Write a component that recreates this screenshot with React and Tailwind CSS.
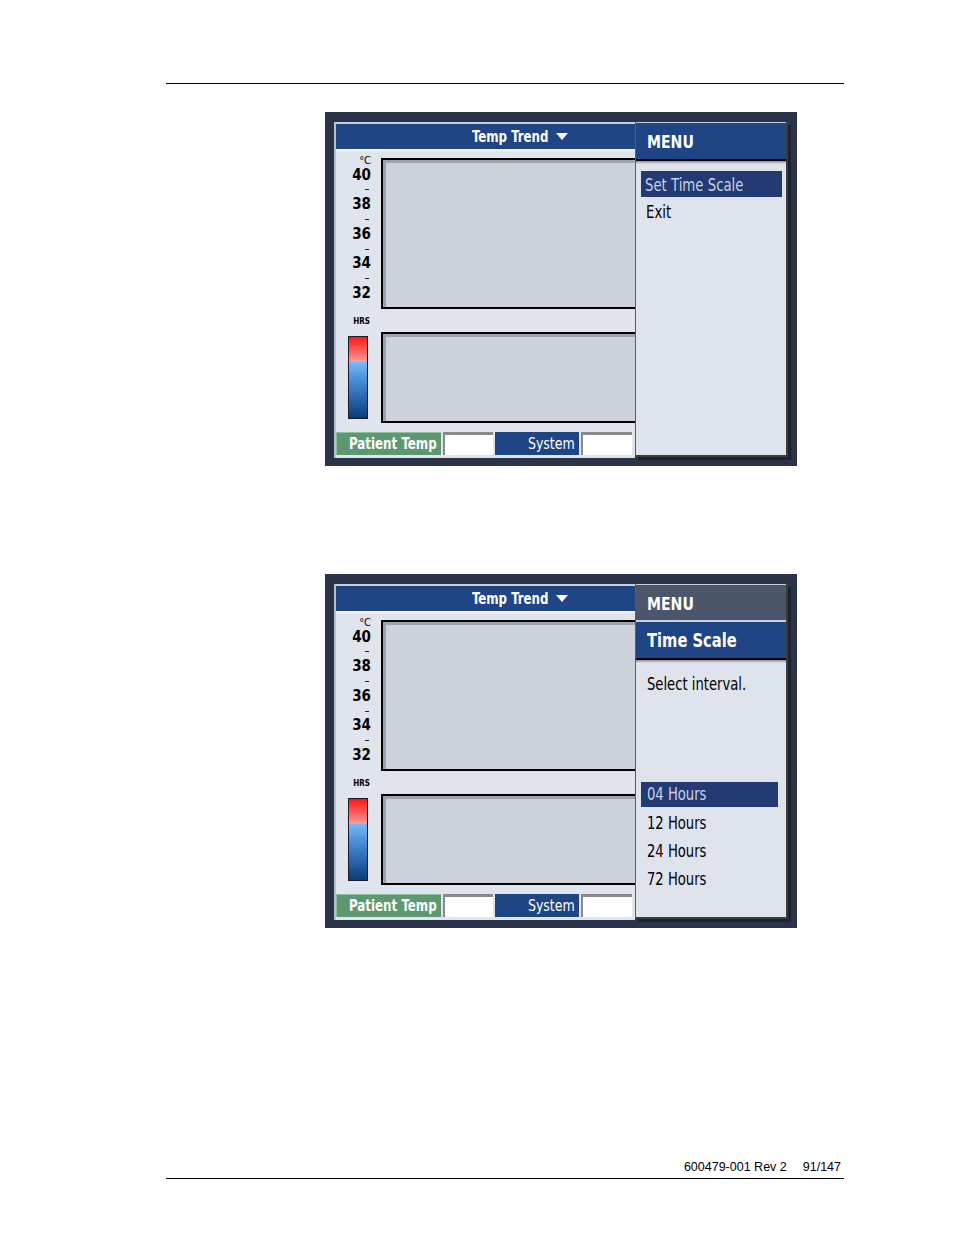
import React from "react";

const narrow = { fontFamily: '"Liberation Sans Narrow", "DejaVu Sans Condensed", "Liberation Sans", sans-serif' };

const axis = ["40", "-", "38", "-", "36", "-", "34", "-", "32"];

// device font is condensed, squeeze the wide fallback horizontally
const Sq = ({ cls, children }) => (
  <span className={`inline-block whitespace-nowrap ${cls}`}>{children}</span>
);

const ChartBox = ({ h }) => (
  <div className={`${h} w-full bg-[#cdd1d9] border-l-2 border-t-2 border-b-2 border-black shadow-[inset_3px_3px_0_#9ea2aa]`} />
);

const LeftPanel = () => (
  <div className="w-[301px] h-[336px] flex flex-col border-l-2 border-[#b9c1cd] bg-[#e0e4ec]">
    <div className="h-[2px] bg-[#c8d0dc]" />
    {/* header */}
    <div className="h-[25px] bg-[#1f4585] flex items-center pl-[136px] gap-[8px] text-white font-bold text-[16px]" style={narrow}>
      <span className="inline-block w-[76px]">
        <Sq cls="origin-left scale-x-82">Temp Trend</Sq>
      </span>
      <svg width="12" height="8" viewBox="0 0 12 8">
        <polygon points="0,0 12,0 6,7" fill="#ffffff" />
      </svg>
    </div>
    <div className="h-[2px] bg-[#f4f6fa]" />

    {/* body */}
    <div className="h-[280px] flex">
      <div className="w-[45px] flex flex-col items-end pr-[10px] pt-[2px]" style={narrow}>
        <div className="h-[14.8px] flex items-center text-[11px] leading-none text-black">°C</div>
        {axis.map((a, i) =>
          a === "-" ? (
            <div key={i} className="h-[14.8px] flex items-center pr-[2px]">
              <div className="w-[4px] h-px bg-[#222]" />
            </div>
          ) : (
            <div key={i} className="h-[14.8px] flex items-center text-[15px] font-bold leading-none text-black">
              {a}
            </div>
          )
        )}
        <div className="mt-[16px] mr-[1px] h-[10px] flex items-center text-[8px] font-bold leading-none text-black">HRS</div>
        <div className="mt-[9px] mr-[3px] w-[20px] h-[83px] border border-[#1a1a2a] bg-[linear-gradient(to_bottom,#ff1414_0%,#ff4a4a_12%,#ff7070_22%,#ff9c9c_30%,#7ab8f4_31%,#4a90d8_52%,#2a68b0_75%,#0b3a78_100%)]" />
      </div>
      <div className="flex-1 flex flex-col pt-[7px]">
        <ChartBox h="h-[151px]" />
        <div className="h-[23px]" />
        <ChartBox h="h-[91px]" />
      </div>
    </div>

    {/* tabs */}
    <div className="h-[24px] flex gap-[2px] pt-[1px]" style={narrow}>
      <div className="w-[105px] bg-[#5e9872] border-t border-l border-[#8cc0a0] flex items-center justify-end pr-[4px] text-white font-bold text-[15px]">
        <Sq cls="origin-right scale-x-88">Patient Temp</Sq>
      </div>
      <div className="w-[50px] bg-white border-t-[3px] border-l-2 border-[#8a8a8a]" />
      <div className="w-[84px] bg-[#1f4585] flex items-center justify-end pr-[4px] text-white text-[16px]">
        <Sq cls="origin-right scale-x-87">System</Sq>
      </div>
      <div className="w-[51px] bg-white border-t-[3px] border-l-2 border-[#8a8a8a]" />
    </div>
    <div className="flex-1" />
  </div>
);

const MenuOne = () => (
  <div className="w-[153px] h-[335px] flex flex-col border-l border-[#2e64a8] border-r-2 border-b-2 border-r-[#3c3c3c] border-b-[#3c3c3c] bg-[#dfe3ec] shadow-[3px_3px_0_#1c2230]" style={narrow}>
    <div className="h-px bg-[#c8d0dc]" />
    <div className="h-[36px] bg-[#1f4585] flex items-center pl-[11px] pt-[3px] text-white font-bold text-[17px]">
      <Sq cls="origin-left scale-x-92">MENU</Sq>
    </div>
    <div className="h-[2px] bg-black" />
    <div className="h-[3px] bg-gradient-to-b from-[#8a8e96] to-[#dfe3ec]" />
    <div className="pt-[7px]">
      <div className="ml-[5px] mr-[4px] h-[26px] bg-[#233a72] flex items-center pl-[4px] text-[#c9d2e6] text-[18px]">
        <Sq cls="origin-left scale-x-82">Set Time Scale</Sq>
      </div>
      <div className="h-[28px] flex items-center pl-[10px] pt-[1px] text-black text-[18px]">
        <Sq cls="origin-left scale-x-82">Exit</Sq>
      </div>
    </div>
  </div>
);

const MenuTwo = () => (
  <div className="w-[153px] h-[335px] flex flex-col border-l border-[#2e64a8] border-r-2 border-b-2 border-r-[#3c3c3c] border-b-[#3c3c3c] bg-[#dfe3ec] shadow-[3px_3px_0_#1c2230]" style={narrow}>
    <div className="h-px bg-[#c8d0dc]" />
    <div className="h-[35px] bg-[#4b566a] flex items-center pl-[11px] pt-[4px] text-white font-bold text-[17px]">
      <Sq cls="origin-left scale-x-92">MENU</Sq>
    </div>
    <div className="h-[2px] bg-[#c8d0dc]" />
    <div className="h-[36px] bg-[#1f4585] flex items-center pl-[11px] pt-[1px] text-white font-bold text-[19px]">
      <Sq cls="origin-left scale-x-86">Time Scale</Sq>
    </div>
    <div className="h-[2px] bg-black" />
    <div className="h-[3px] bg-gradient-to-b from-[#8a8e96] to-[#dfe3ec]" />
    <div className="pt-[11px] pl-[11px] leading-[20px] text-black text-[17px]">
      <Sq cls="origin-left scale-x-86">Select interval.</Sq>
    </div>
    <div className="mt-[88px]">
      <div className="ml-[5px] mr-[8px] h-[25px] bg-[#233a72] flex items-center pl-[6px] pt-[1px] text-[#c9d2e6] text-[17px]">
        <Sq cls="origin-left scale-x-86">04 Hours</Sq>
      </div>
      <div className="mt-[2px]">
        {["12 Hours", "24 Hours", "72 Hours"].map((t) => (
          <div key={t} className="h-[28px] flex items-center pl-[11px] pt-[1px] text-black text-[17px]">
            <Sq cls="origin-left scale-x-86">{t}</Sq>
          </div>
        ))}
      </div>
    </div>
  </div>
);

const Screen = ({ second }) => (
  <div className="ml-[325px] w-[472px] h-[354px] bg-[#2a3347] pl-[9px] pt-[10px] flex">
    <LeftPanel />
    {second ? <MenuTwo /> : <MenuOne />}
  </div>
);

export default function App() {
  return (
    <div className="w-[954px] h-[1235px] bg-white flex flex-col" style={{ fontFamily: '"Liberation Sans", Arial, sans-serif' }}>
      <div className="mt-[83px] ml-[166px] w-[678px] h-px bg-black" />
      <div className="mt-[28px]">
        <Screen />
      </div>
      <div className="mt-[108px]">
        <Screen second />
      </div>
      <div className="mt-[232px] ml-[166px] w-[678px] flex justify-end pr-[3px] text-[12.5px] leading-[14px] text-black">
        <span>600479-001 Rev 2</span>
        <span className="ml-[16px]">91/147</span>
      </div>
      <div className="mt-[4px] ml-[166px] w-[678px] h-px bg-black" />
    </div>
  );
}
